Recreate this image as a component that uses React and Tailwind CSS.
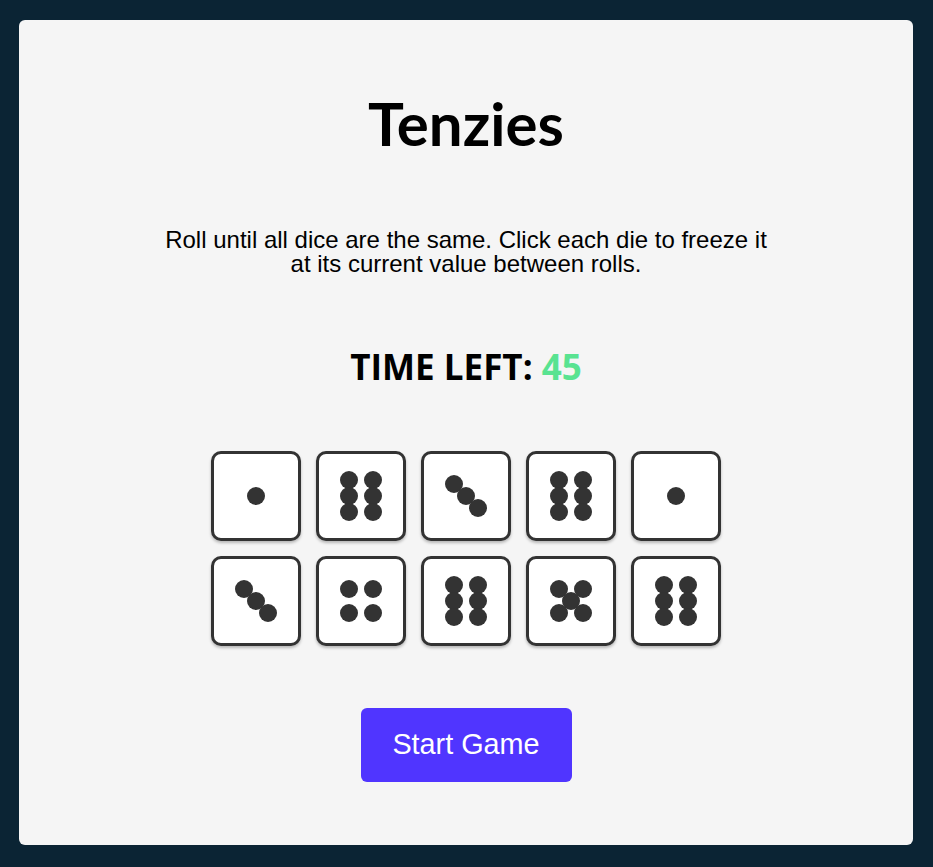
import React from "react";

const FACES = {
  1: [[0, 0]],
  3: [[-12, -12], [0, 0], [12, 12]],
  4: [[-12, -12], [12, -12], [-12, 12], [12, 12]],
  5: [[-12, -12], [12, -12], [0, 0], [-12, 12], [12, 12]],
  6: [[-12, -16], [12, -16], [-12, 0], [12, 0], [-12, 16], [12, 16]],
};

const DICE = [1, 6, 3, 6, 1, 3, 4, 6, 5, 6];

function Die({ value }) {
  return (
    <div className="w-[90px] h-[90px] bg-white border-[3px] border-[#333333] rounded-[10px] shadow-[0_2px_3px_rgba(0,0,0,0.25)] flex items-center justify-center">
      <svg width="84" height="84" viewBox="-42 -42 84 84">
        {FACES[value].map(([x, y], i) => (
          <circle key={i} cx={x} cy={y} r="9" fill="#333333" />
        ))}
      </svg>
    </div>
  );
}

export default function App() {
  return (
    <div className="bg-[#0B2434] w-[933px] h-[867px] pt-[20px] pl-[19px]">
      <main className="w-[894px] h-[825px] bg-[#F5F5F5] rounded-[6px] flex flex-col items-center">
        <h1 className="mt-[73px] text-[60px] leading-none font-bold text-black font-['Lato',sans-serif]">
          Tenzies
        </h1>
        <p className="mt-[75px] max-w-[615px] text-center text-[24px] leading-[24px] text-black font-['Liberation_Sans',Arial,sans-serif]">
          Roll until all dice are the same. Click each die to freeze it at its current value between rolls.
        </p>
        <h2 className="mt-[73px] text-[35px] leading-none font-bold text-black font-['Open_Sans',sans-serif]">
          TIME LEFT: <span className="text-[#59E391]">45</span>
        </h2>
        <div className="mt-[67px] grid grid-cols-5 gap-[15px]">
          {DICE.map((v, i) => (
            <Die key={i} value={v} />
          ))}
        </div>
        <button className="mt-[62px] w-[211px] h-[74px] bg-[#5035FF] rounded-[6px] text-white text-[28.8px] font-['Liberation_Sans',Arial,sans-serif]">
          Start Game
        </button>
      </main>
    </div>
  );
}
